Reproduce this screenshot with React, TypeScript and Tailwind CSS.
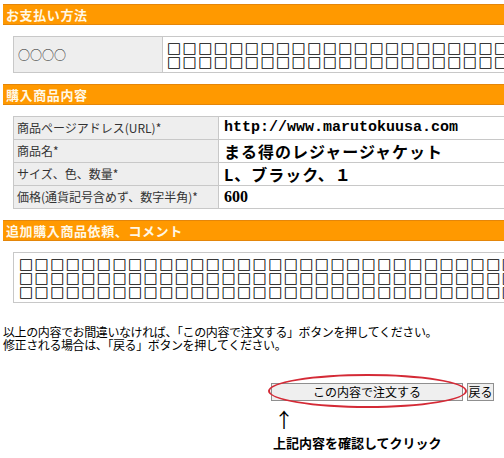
import React from "react";

const jp = { fontFamily: '"Noto Sans CJK JP", sans-serif' };
const sq = { fontFamily: '"DejaVu Sans", sans-serif' };
const boxes = (n: number) => "□".repeat(n);

// orange section header bar
const SectionBar = ({ title }: { title: string }) => (
  <div className="ml-[3px] h-[21px] bg-[#ff9900] border-y border-[#e4860a] flex items-center pl-[3px]">
    <span className="text-[13px] font-bold text-[#fff8e6] leading-none tracking-[0.6px]">{title}</span>
  </div>
);

const rows = [
  { label: "商品ページアドレス(URL)*", value: "http://www.marutokuusa.com", kind: "url" },
  { label: "商品名*", value: "まる得のレジャージャケット", kind: "jp" },
  { label: "サイズ、色、数量*", value: "L、ブラック、１", kind: "jp" },
  { label: "価格(通貨記号含めず、数字半角)*", value: "600", kind: "num" },
];

export default function App() {
  return (
    <div className="relative w-[504px] h-[458px] overflow-hidden bg-white text-black pt-[4px] antialiased" style={jp}>
      <SectionBar title="お支払い方法" />
      <div className="ml-[13px] mt-[11px] mb-[11px] w-[491px] flex border-y border-l border-[#c8c8c8] h-[37px]">
        <div className="w-[149px] bg-[#eeeeee] flex items-center pl-[4px] text-[12px] text-[#222] border-r border-[#c8c8c8]">
          ○○○○
        </div>
        <div
          className="flex-1 flex flex-col justify-center pl-[4px] text-[15px] font-bold leading-[14px] tracking-[1.4px] whitespace-nowrap overflow-hidden"
          style={sq}
        >
          <div>{boxes(26)}</div>
          <div>{boxes(26)}</div>
        </div>
      </div>

      <SectionBar title="購入商品内容" />
      <div className="ml-[13px] mt-[11px] mb-[11px] w-[491px] border-t border-l border-[#c8c8c8]">
        {rows.map((r) => (
          <div key={r.label} className="flex h-[23px] border-b border-[#c8c8c8]">
            <div className="w-[205px] bg-[#eeeeee] flex items-center pl-[3px] text-[12px] text-[#333] border-r border-[#c8c8c8]">
              {r.label}
            </div>
            <div className="flex-1 flex items-center pl-[5px] whitespace-nowrap">
              {r.kind === "url" && (
                <span className="text-[15px] font-bold" style={{ fontFamily: '"Liberation Mono", monospace' }}>
                  {r.value}
                </span>
              )}
              {r.kind === "jp" && <span className="text-[16px] font-bold tracking-[1px]">{r.value}</span>}
              {r.kind === "num" && (
                <span className="text-[16px] font-bold" style={{ fontFamily: '"Liberation Serif", serif' }}>
                  {r.value}
                </span>
              )}
            </div>
          </div>
        ))}
      </div>

      <SectionBar title="追加購入商品依頼、コメント" />
      <div
        className="ml-[13px] mt-[11px] w-[491px] h-[51px] border-y border-l border-[#c8c8c8] flex flex-col justify-center pl-[5px] text-[15px] font-bold leading-[14px] tracking-[1.4px] whitespace-nowrap overflow-hidden"
        style={sq}
      >
        <div>{boxes(37)}</div>
        <div>{boxes(37)}</div>
        <div>{boxes(37)}</div>
      </div>

      <div className="mt-[22px] ml-[3px] text-[12px] leading-[13px] tracking-[-0.4px]">
        <p>以上の内容でお間違いなければ、「この内容で注文する」ボタンを押してください。</p>
        <p>修正される場合は、「戻る」ボタンを押してください。</p>
      </div>

      <div className="mt-[32px] flex gap-[4px] pl-[271px]">
        <div className="relative">
          <button className="w-[192px] h-[18px] bg-[#efefef] border border-[#8f8f8f] text-[12px] leading-none flex items-center justify-center">
            この内容で注文する
          </button>
          <div className="absolute -left-[3px] -top-[9px] w-[199px] h-[34px] rounded-[50%] border-2 border-[#d42a36] pointer-events-none" />
        </div>
        <button className="w-[27px] h-[18px] bg-[#efefef] border border-[#8f8f8f] text-[12px] leading-none flex items-center justify-center">
          戻る
        </button>
      </div>

      <div className="absolute left-[274px] top-[410px] text-[20px] leading-none">↑</div>
      <div className="absolute left-[273px] top-[435px] text-[13px] font-bold leading-[16px]">上記内容を確認してクリック</div>
    </div>
  );
}
